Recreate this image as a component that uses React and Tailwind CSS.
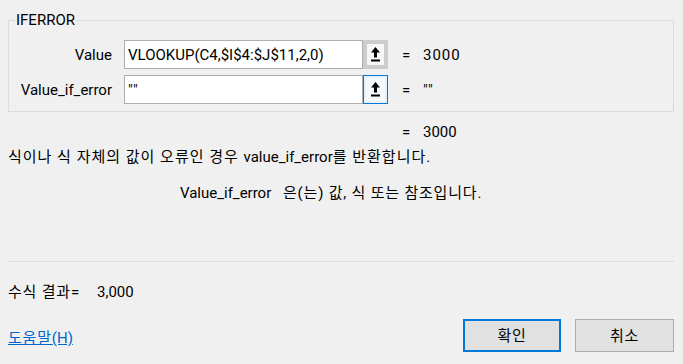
const FONT = "font-['Roboto','Noto_Sans_CJK_KR',sans-serif]";

function RefIcon() {
  return (
    <svg width="9" height="15" viewBox="0 0 9 15" aria-hidden="true">
      <polygon points="4.5,0 9,5.5 6,5.5 6,10.5 3,10.5 3,5.5 0,5.5" fill="#000" />
      <rect x="0" y="12.5" width="9" height="2" fill="#000" />
    </svg>
  );
}

function Ko({ children, wide }) {
  return <span className={wide ? "tracking-[1px]" : "tracking-[0.8px]"}>{children}</span>;
}

function ArgRow({ label, value, result, focused }) {
  return (
    <div className="flex h-[29px] items-center">
      <div className="w-[103px] text-right leading-[20px]">{label}</div>
      <div className="ml-[12px] flex h-[29px] w-[239px] items-center border border-[#adadad] bg-white px-[3px] leading-[20px] whitespace-nowrap overflow-hidden">
        {value}
      </div>
      {focused ? (
        <div className="flex h-[29px] w-[25px] items-center justify-center border border-[#0078d7] bg-[#e5f1fb]">
          <div className="flex h-[23px] w-[19px] items-center justify-center bg-[#f4f9fd]">
            <RefIcon />
          </div>
        </div>
      ) : (
        <div className="flex h-[29px] w-[25px] items-center justify-center border-[4px] border-[#cccccc] bg-[#f7f7f7]">
          <RefIcon />
        </div>
      )}
      <div className="ml-[14px] w-[21px] leading-[20px]">=</div>
      <div className="leading-[20px] tracking-[1px]">{result}</div>
    </div>
  );
}

export default function App() {
  return (
    <div
      className={`${FONT} flex h-[364px] w-[683px] flex-col bg-[#f0f0f0] pl-[8px] pr-[9px] text-[15px] text-black`}
    >
      {/* Function arguments group */}
      <fieldset className="mt-[10px] border border-[#dcdcdc]">
        <legend className="ml-[6px] px-[1px] leading-[20px]">IFERROR</legend>
        <div className="flex flex-col gap-[6px] pt-[10px] pb-[7px]">
          <ArgRow label="Value" value="VLOOKUP(C4,$I$4:$J$11,2,0)" result="3000" />
          <ArgRow label="Value_if_error" value={<span className="tracking-[1px]">""</span>} result={'""'} focused />
        </div>
      </fieldset>

      <div className="mt-[10px] flex leading-[20px]">
        <div className="w-[394px]" />
        <div className="w-[21px]">=</div>
        <div>3000</div>
      </div>

      <div className="mt-[5px] leading-[20px] whitespace-nowrap">
        <Ko wide>식이나 식 자체의 값이 오류인 경우 </Ko>value_if_error<Ko wide>를 반환합니다.</Ko>
      </div>

      <div className="mt-[16px] flex pl-[172px] leading-[20px]">
        <span className="w-[103px]">Value_if_error</span>
        <Ko>은(는) 값, 식 또는 참조입니다.</Ko>
      </div>

      <div className="mt-[58px] h-px bg-[#dcdcdc]" />

      <div className="mt-[20px] flex leading-[20px]">
        <span className="w-[89px]">
          <Ko>수식 결과</Ko>=
        </span>
        <span>3,000</span>
      </div>

      <div className="mt-[17px] flex items-start">
        <a href="#" className="mt-[9px] leading-[20px] text-[#0066cc] underline">
          <Ko>도움말</Ko>(H)
        </a>
        <div className="ml-auto flex gap-[14px]">
          <button className="h-[33px] w-[98px] border-2 border-[#0078d7] bg-[#e1e1e1] leading-[20px]">
            <Ko>확인</Ko>
          </button>
          <button className="h-[33px] w-[99px] border border-[#adadad] bg-[#e1e1e1] leading-[20px]">
            <Ko>취소</Ko>
          </button>
        </div>
      </div>
    </div>
  );
}
